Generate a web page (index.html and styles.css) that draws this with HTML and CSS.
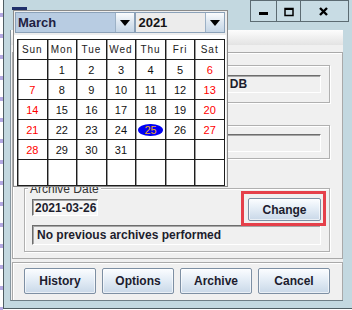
FILE: index.html
```html
<!DOCTYPE html>
<html lang="en">
<head>
  <meta charset="UTF-8">
  <meta name="viewport" content="width=device-width, initial-scale=1.0">
  <title>Archive</title>
  <link rel="stylesheet" href="styles.css">
</head>
<body>
  <div class="desk">
    <div class="edge"></div>

    <div class="window">
      <!-- Title bar -->
      <div class="titlebar">
        <span class="app-icon"></span>
        <div class="caption-buttons">
          <div class="cap cap-min">
            <svg width="25" height="20" viewBox="0 0 25 20"><rect x="8" y="11" width="9" height="3" fill="#000"/></svg>
          </div>
          <div class="cap cap-max">
            <svg width="23" height="20" viewBox="0 0 23 20"><rect x="8" y="7.5" width="8" height="7" fill="none" stroke="#000" stroke-width="1.5"/><rect x="8" y="7" width="8" height="2" fill="#000"/></svg>
          </div>
          <div class="cap cap-close">
            <svg width="47" height="20" viewBox="0 0 47 20"><path d="M19 7 L26 14 M26 7 L19 14" stroke="#000" stroke-width="2.4" fill="none"/></svg>
          </div>
        </div>
      </div>

      <!-- Dialog body -->
      <div class="dialog">
        <div class="tab-band"></div>
        <div class="main-panel">
          <div class="group">
            <div class="field">Connected database: HISTORIAN DB</div>
          </div>
          <div class="group group-second">
            <div class="field"></div>
          </div>
          <div class="group archive">
            <div class="group-title">Archive Date</div>
            <div class="date-row">
              <div class="field date">2021-03-26</div>
              <button class="btn change">Change</button>
            </div>
            <div class="field status">No previous archives performed</div>
          </div>
        </div>
        <div class="button-bar">
          <button class="btn">History</button>
          <button class="btn">Options</button>
          <button class="btn">Archive</button>
          <button class="btn">Cancel</button>
        </div>
      </div>
    </div>

    <!-- Date chooser popup -->
    <div class="popup">
      <div class="combos">
        <div class="combo month">
          <div class="combo-text">March</div>
          <div class="combo-arrow"><svg width="10" height="6" viewBox="0 0 10 6"><path d="M0 0 H10 L5 6 Z" fill="#000"/></svg></div>
        </div>
        <div class="combo year">
          <div class="combo-text">2021</div>
          <div class="combo-arrow"><svg width="10" height="6" viewBox="0 0 10 6"><path d="M0 0 H10 L5 6 Z" fill="#000"/></svg></div>
        </div>
      </div>
      <div class="cal-body">
        <div class="cal-grid">
          <div class="cell head">Sun</div>
          <div class="cell head">Mon</div>
          <div class="cell head">Tue</div>
          <div class="cell head">Wed</div>
          <div class="cell head">Thu</div>
          <div class="cell head">Fri</div>
          <div class="cell head">Sat</div>

          <div class="cell"></div>
          <div class="cell">1</div>
          <div class="cell">2</div>
          <div class="cell">3</div>
          <div class="cell">4</div>
          <div class="cell">5</div>
          <div class="cell weekend">6</div>

          <div class="cell weekend">7</div>
          <div class="cell">8</div>
          <div class="cell">9</div>
          <div class="cell">10</div>
          <div class="cell">11</div>
          <div class="cell">12</div>
          <div class="cell weekend">13</div>

          <div class="cell weekend">14</div>
          <div class="cell">15</div>
          <div class="cell">16</div>
          <div class="cell">17</div>
          <div class="cell">18</div>
          <div class="cell">19</div>
          <div class="cell weekend">20</div>

          <div class="cell weekend">21</div>
          <div class="cell">22</div>
          <div class="cell">23</div>
          <div class="cell">24</div>
          <div class="cell"><span class="today">25</span></div>
          <div class="cell">26</div>
          <div class="cell weekend">27</div>

          <div class="cell weekend">28</div>
          <div class="cell">29</div>
          <div class="cell">30</div>
          <div class="cell">31</div>
          <div class="cell"></div>
          <div class="cell"></div>
          <div class="cell"></div>

          <div class="cell"></div>
          <div class="cell"></div>
          <div class="cell"></div>
          <div class="cell"></div>
          <div class="cell"></div>
          <div class="cell"></div>
          <div class="cell"></div>
        </div>
      </div>
    </div>
  </div>
</body>
</html>
```

FILE: styles.css
```css
* {
  box-sizing: border-box;
}
body {
  margin: 0;
  background: #fff;
  font-family: "Liberation Sans", Arial, sans-serif;
  font-size: 12px;
}
.desk {
  position: relative;
  width: 352px;
  height: 310px;
  overflow: hidden;
  display: flex;
  align-items: flex-start;
}
.edge {
  width: 3px;
  height: 310px;
  background: repeating-linear-gradient(to bottom, #fff 0 13px, #b4a8e2 13px 17px, #fff 17px 21px);
}
.window {
  width: 349px;
  height: 309px;
  background: #c3d8e0;
  border-left: 1px solid #4f5d63;
  border-bottom: 1px solid #4f5d63;
}

/* Title bar */
.titlebar {
  height: 30px;
  display: flex;
  align-items: flex-start;
}
.app-icon {
  width: 15px;
  height: 3px;
  margin: 7px 0 0 8px;
  background: #1f2f6b;
}
.caption-buttons {
  display: flex;
  margin-left: auto;
  margin-right: 3px;
}
.cap {
  height: 22px;
  border: 1px solid #5c6b72;
  background: #c8dce4;
  margin-left: -1px;
}
.cap svg {
  display: block;
}
.cap-min { width: 27px; }
.cap-max { width: 25px; }
.cap-close { width: 49px; }

/* Dialog */
.dialog {
  width: 333px;
  height: 271px;
  margin-left: 6px;
  background: #f0f0f0;
  border-left: 1px solid #8796a0;
  border-bottom: 1px solid #6f7e86;
}
.tab-band {
  height: 15px;
  margin-bottom: 7px;
  background: linear-gradient(#fdfdfd, #e3e3e3);
}
.main-panel {
  height: 207px;
  margin-left: 1px;
  padding: 12px 0 0 11px;
  border: 1px solid #a9a9a9;
  box-shadow: inset 1px 1px 0 #fff;
}
.group {
  width: 306px;
  padding: 9px 8px;
  border: 1px solid #b0b0b0;
  box-shadow: inset 1px 1px 0 #fff, 1px 1px 0 #fff;
}
.group-second {
  margin-top: 22px;
  padding: 8px 8px 6px;
}
.field {
  height: 18px;
  padding: 1px 2px 0;
  border: 1px solid;
  border-color: #6d6d6d #fff #fff #6d6d6d;
  box-shadow: inset 1px 1px 0 #a6a6a6;
  background: #f0f0f0;
  font-weight: bold;
  color: #1d1d2d;
  line-height: 15px;
  white-space: nowrap;
  overflow: hidden;
}
.archive {
  margin-top: 29px;
  padding: 0 8px 6px 7px;
}
.group-title {
  width: fit-content;
  margin: -7px 0 0 -4px;
  padding: 0 2px;
  background: #f0f0f0;
  color: #333;
  line-height: 14px;
}
.date-row {
  display: flex;
  justify-content: space-between;
  align-items: flex-start;
  margin-top: 2px;
}
.field.date {
  width: 66px;
  height: 17px;
  margin-top: 1px;
  background: #f6f6f6;
  line-height: 14px;
}
.field.status {
  height: 20px;
  margin-top: 4px;
  padding-left: 4px;
  line-height: 17px;
}

/* Buttons */
.btn {
  height: 26px;
  padding: 0;
  font-family: "Liberation Sans", Arial, sans-serif;
  font-size: 12px;
  font-weight: bold;
  color: #1c1c2e;
  background: linear-gradient(#fbfdff, #e4edf6 45%, #c9d8e8);
  border: 1px solid #7d8fa3;
  border-radius: 2px;
  box-shadow: inset 0 0 0 1px rgba(255, 255, 255, 0.6);
}
.btn.change {
  position: relative;
  width: 73px;
  height: 23px;
}
/* highlight frame drawn over the Change button */
.btn.change::after {
  content: "";
  position: absolute;
  top: -8px;
  left: -8px;
  right: -6px;
  bottom: -6px;
  border: 3px solid #e5404a;
}
.button-bar {
  height: 38px;
  margin: 3px 0 0 1px;
  padding: 5px 0 0 11px;
  display: flex;
  gap: 6px;
  border: 1px solid #a9a9a9;
  border-bottom: none;
  box-shadow: inset 1px 1px 0 #fff;
}
.button-bar .btn {
  width: 72px;
}

/* Date chooser popup */
.popup {
  position: absolute;
  left: 13px;
  top: 10px;
  width: 215px;
  height: 177px;
  background: #eeeeee;
  border: 1px solid #8a8a8a;
}
.combos {
  display: flex;
  height: 21px;
  margin: 1px 2px 2px 1px;
}
.combo {
  display: flex;
  border: 1px solid #8ba1b8;
}
.combo.month {
  width: 121px;
}
.combo.year {
  width: 90px;
}
.combo-text {
  flex: 1;
  padding-left: 2px;
  font-size: 13px;
  font-weight: bold;
  line-height: 19px;
  color: #1f2142;
}
.month .combo-text {
  background: #b8cce2;
}
.year .combo-text {
  background: #ececec;
  color: #151515;
}
.combo-arrow {
  width: 19px;
  display: flex;
  align-items: center;
  justify-content: center;
  border-left: 1px solid #9cb1c6;
  background: linear-gradient(#fafcfe, #dce6f0 50%, #c6d6e6);
}
.cal-body {
  height: 150px;
  margin-right: 1px;
  padding: 4px 1px 0 3px;
  background: #fff;
}
.cal-grid {
  display: grid;
  grid-template-columns: repeat(7, 1fr);
  grid-template-rows: repeat(6, 20px) 26px;
  border-top: 1px solid #1e1e1e;
  border-left: 1px solid #1e1e1e;
}
.cell {
  display: flex;
  align-items: center;
  justify-content: center;
  border-right: 1px solid #1e1e1e;
  border-bottom: 1px solid #1e1e1e;
  box-shadow: inset 1px 0 0 #9c9c9c;
  color: #111;
  font-size: 11px;
}
.cell.head {
  font-size: 10px;
  letter-spacing: 1px;
  color: #222;
}
.cell.weekend {
  color: #f00;
}
.today {
  display: inline-block;
  padding: 0 6px;
  line-height: 12px;
  border-radius: 50%;
  background: #0000f5;
  color: #f0a81c;
}
```
